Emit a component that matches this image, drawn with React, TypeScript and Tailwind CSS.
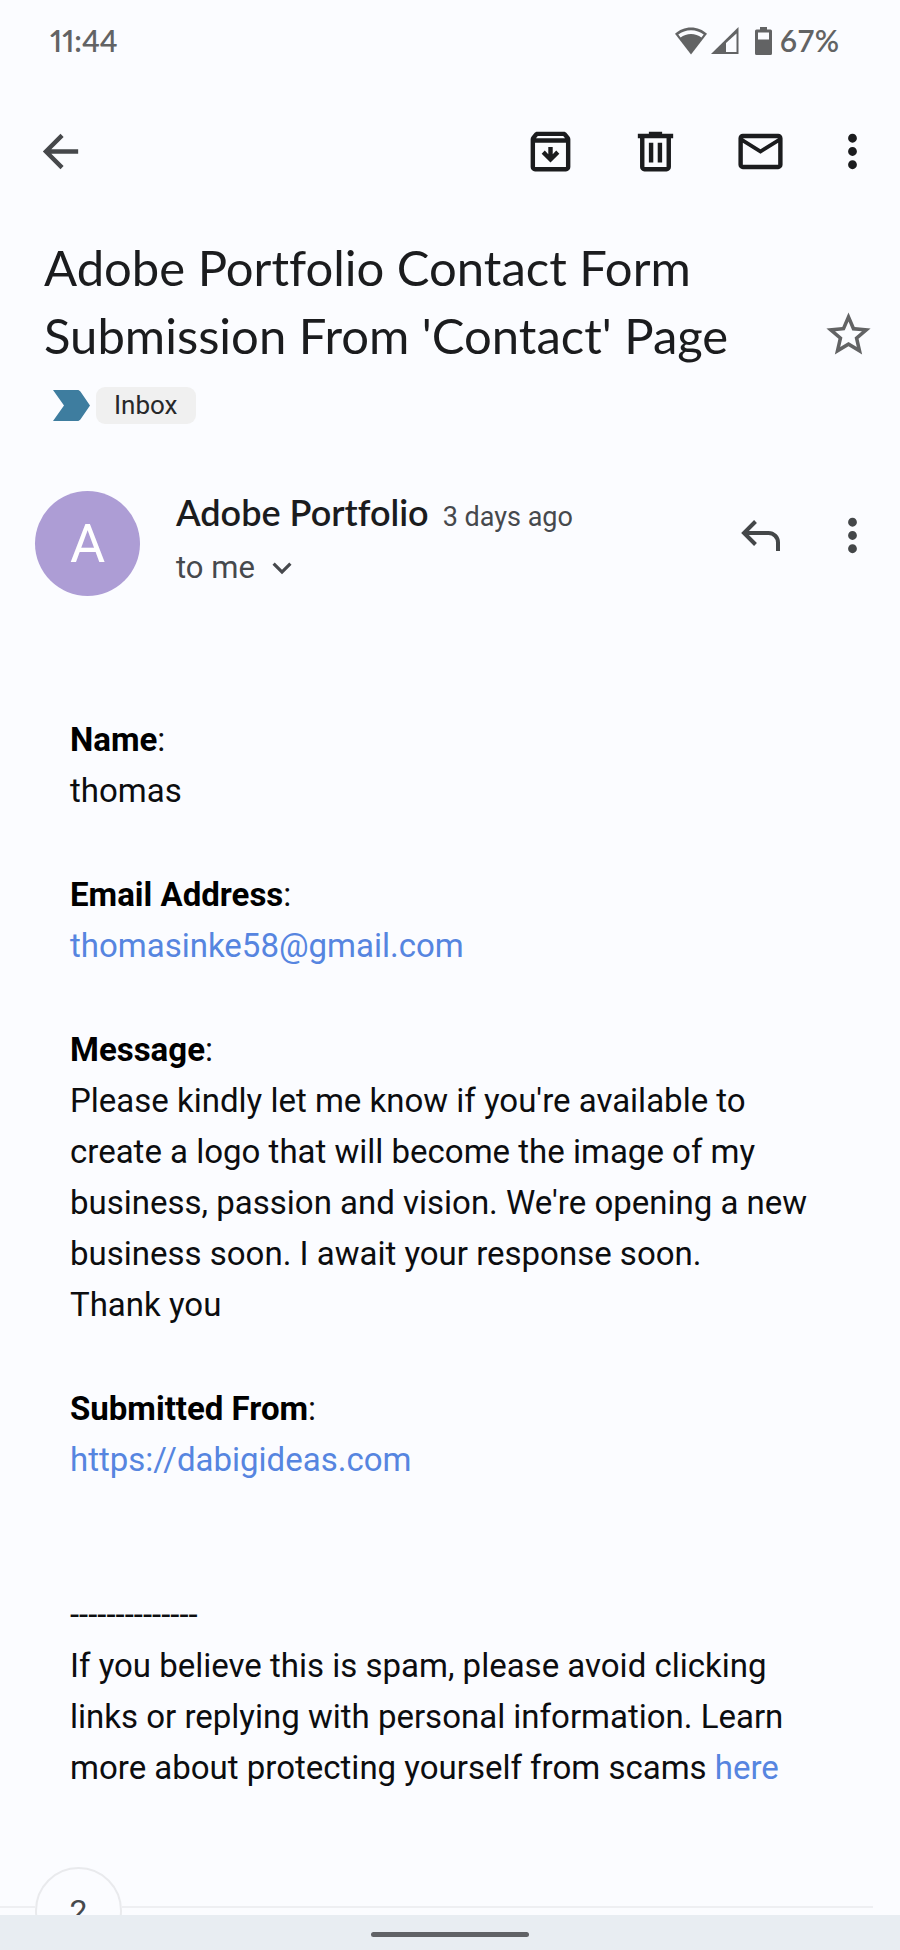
import React from "react";
import { MdArrowBack, MdKeyboardArrowDown, MdMailOutline, MdMoreVert, MdStarBorder } from "react-icons/md";

interface Field {
  label: string;
  lines: string[];
  href?: string;
}

const fields: Field[] = [
  { label: "Name", lines: ["thomas"] },
  { label: "Email Address", lines: ["thomasinke58@gmail.com"], href: "mailto:thomasinke58@gmail.com" },
  {
    label: "Message",
    lines: [
      "Please kindly let me know if you're available to create a logo that will become the image of my business, passion and vision. We're opening a new business soon. I await your response soon.",
      "Thank you",
    ],
  },
  { label: "Submitted From", lines: ["https://dabigideas.com"], href: "https://dabigideas.com" },
];

const WifiIcon = () => (
  <svg viewBox="0 0 32 28" className="h-7 w-8" aria-hidden="true">
    <path d="M16 .5C9.800.5 4.200 2.900 0 6.800L16 27.500 32 6.800C27.800 2.900 22.200.5 16 .5z" fill="#626364" />
    <path d="M16 3.200c-4.900 0-9.300 1.600-12.700 4.300l2.300 3C8.500 8.300 12.100 7 16 7s7.500 1.300 10.400 3.500l2.300-3C25.300 4.800 20.900 3.200 16 3.200z" fill="#fbfcff" />
  </svg>
);

const SignalIcon = () => (
  <svg viewBox="0 0 28 28" className="size-7" aria-hidden="true">
    <path d="M27.500 0v27H0z" fill="#626364" />
    <path d="M25.500 6.500v18.500H15V16z" fill="#fbfcff" />
  </svg>
);

const BatteryIcon = () => (
  <svg viewBox="0 0 17 28" className="h-7 w-[17px]" aria-hidden="true">
    <path fillRule="evenodd" d="M5 0h7v2.500h3.500A1.500 1.500 0 0 1 17 4v22.500a1.500 1.500 0 0 1-1.500 1.500h-14A1.500 1.500 0 0 1 0 26.500V4a1.500 1.500 0 0 1 1.500-1.500H5zM3 5.500v7h11v-7z" fill="#626364" />
  </svg>
);

const ArchiveIcon = () => (
  <svg viewBox="0 0 24 24" className="size-[53px]" fill="currentColor" aria-hidden="true">
    <path fillRule="evenodd" d="M20.540 5.230l-1.390-1.680C18.880 3.210 18.470 3 18 3H6c-.47 0-.88.21-1.160.55L3.460 5.230C3.170 5.570 3 6.020 3 6.500V19c0 1.100.9 2 2 2h14c1.100 0 2-.9 2-2V6.500c0-.48-.17-.93-.46-1.270zM6.240 5h11.520l.83 1H5.420zM5 19V8h14v11z" />
    <path d="M12 17l-4-4 1.400-1.400L11 13.200V10h2v3.200l1.600-1.600L16 13z" />
  </svg>
);

const TrashIcon = () => (
  <svg viewBox="0 0 24 24" className="size-[53px]" fill="currentColor" aria-hidden="true">
    <path fillRule="evenodd" d="M9 3h6v1h5v2h-1v13c0 1.100-.9 2-2 2H7c-1.100 0-2-.9-2-2V6H4V4h5zM7 6v13h10V6zM9 8h2v9H9zM13 8h2v9h-2z" />
  </svg>
);

const ReplyIcon = () => (
  <svg viewBox="0 0 40 32" className="h-8 w-10" fill="none" stroke="currentColor" strokeWidth="4" aria-hidden="true">
    <path d="M14.500 1.500L3 13l11.500 11.500M3 13h24.500a9.500 9.500 0 0 1 9.500 9.500V31" />
  </svg>
);

const StatusBar = () => (
  <div className="flex h-[81px] shrink-0 items-center justify-between pl-[50px] pr-[61px] font-['Lato'] text-[30px] font-semibold text-[#626364]">
    <span className="proportional-nums">11:44</span>
    <div className="flex items-center">
      <WifiIcon />
      <span className="ml-1">
        <SignalIcon />
      </span>
      <span className="ml-4 mr-2">
        <BatteryIcon />
      </span>
      <span>67%</span>
    </div>
  </div>
);

const Toolbar = () => (
  <header className="flex h-[140px] shrink-0 items-center justify-between pl-[34px] pr-[21px] text-[#1b1c1e]">
    <button aria-label="Back" className="text-[#46484b]">
      <MdArrowBack className="size-[53px]" />
    </button>
    <div className="flex items-center gap-[52px]">
      <button aria-label="Archive">
        <ArchiveIcon />
      </button>
      <button aria-label="Delete">
        <TrashIcon />
      </button>
      <div className="flex items-center gap-[39px]">
        <button aria-label="Mark as unread">
          <MdMailOutline className="size-[53px]" />
        </button>
        <button aria-label="More options">
          <MdMoreVert className="size-[53px]" />
        </button>
      </div>
    </div>
  </header>
);

const Subject = () => (
  <section className="pl-[44px] pr-[25px] pt-3">
    <div className="flex items-end justify-between">
      <h1 className="max-w-[740px] font-['Lato'] text-[49px] leading-[68px] text-[#1b1c1e] [font-variant-ligatures:none]">
        Adobe Portfolio Contact Form Submission From 'Contact' Page
      </h1>
      <button aria-label="Star" className="mb-2 text-[#626364]">
        <MdStarBorder className="size-[53px]" />
      </button>
    </div>
    <div className="mt-[18px] flex items-center gap-1.5 pl-[9px]">
      <svg viewBox="0 0 37 31" className="h-[31px] w-[37px]" aria-hidden="true">
        <path d="M0 0h24.500c1.200 0 2.200.6 2.900 1.500L37 15.500 27.400 29.500c-.7.9-1.700 1.500-2.900 1.500H0L11 15.500z" fill="#3e7d9f" />
      </svg>
      <span className="rounded-[9px] bg-[#f0f0f0] px-[18px] text-[26px] leading-[37px] text-[#27282a]">Inbox</span>
    </div>
  </section>
);

const Sender = () => (
  <section className="mt-[67px] flex items-center pl-[35px] pr-[21px]">
    <div className="flex size-[105px] shrink-0 items-center justify-center rounded-full bg-[#ad9dd5] text-[54px] text-white">
      A
    </div>
    <div className="ml-9 flex-1 self-start text-[#46494d]">
      <div className="flex items-baseline gap-3.5 leading-[42px]">
        <span className="font-['Lato'] text-[36px] font-semibold text-[#1b1c1e] [font-variant-ligatures:none]">
          Adobe Portfolio
        </span>
        <span className="text-[27px]">3 days ago</span>
      </div>
      <button className="mt-1.5 flex items-center gap-2 text-[31px] leading-[48px]">
        to me
        <MdKeyboardArrowDown className="size-[38px]" />
      </button>
    </div>
    <div className="mb-4 flex items-center gap-[45px] text-[#444749]">
      <button aria-label="Reply">
        <ReplyIcon />
      </button>
      <button aria-label="More">
        <MdMoreVert className="size-[53px]" />
      </button>
    </div>
  </section>
);

const App: React.FC = () => {
  return (
    <div className="flex h-screen flex-col bg-[#fbfcff] font-['Roboto',sans-serif]">
      <StatusBar />
      <Toolbar />
      <main className="min-h-0 flex-1 overflow-hidden">
        <Subject />
        <Sender />

        {/* Message body */}
        <article className="mt-[118px] pl-[70px] pr-[80px] text-[33px] leading-[51px] text-[#0c0d0f]">
          {fields.map((field) => (
            <div key={field.label} className="mb-[53px]">
              <p>
                <b className="font-bold text-black">{field.label}</b>:
              </p>
              {field.lines.map((line) => (
                <p key={line}>
                  {field.href ? (
                    <a href={field.href} className="text-[#5685e0]">
                      {line}
                    </a>
                  ) : (
                    line
                  )}
                </p>
              ))}
            </div>
          ))}
          <p className="pt-[51px]">--------------</p>
          <p>
            If you believe this is spam, please avoid clicking links or replying with personal information. Learn more
            about protecting yourself from scams{" "}
            <a href="#scams" className="text-[#5685e0]">
              here
            </a>
          </p>
        </article>

        {/* Collapsed messages divider */}
        <div className="mt-[74px] flex items-center pr-[27px]">
          <span className="mb-2 h-0.5 w-[35px] bg-[#eeeff2]" />
          <button className="flex size-[87px] items-center justify-center rounded-full border-2 border-[#e9eaed] text-[32px] text-[#46494d]">
            2
          </button>
          <span className="mb-2 h-0.5 flex-1 bg-[#eeeff2]" />
        </div>
      </main>
      <nav className="flex h-[35px] shrink-0 items-center justify-center bg-[#e8edf2] pt-1">
        <span className="h-[5px] w-[158px] rounded-full bg-[#606266]" />
      </nav>
    </div>
  );
};

export default App;
